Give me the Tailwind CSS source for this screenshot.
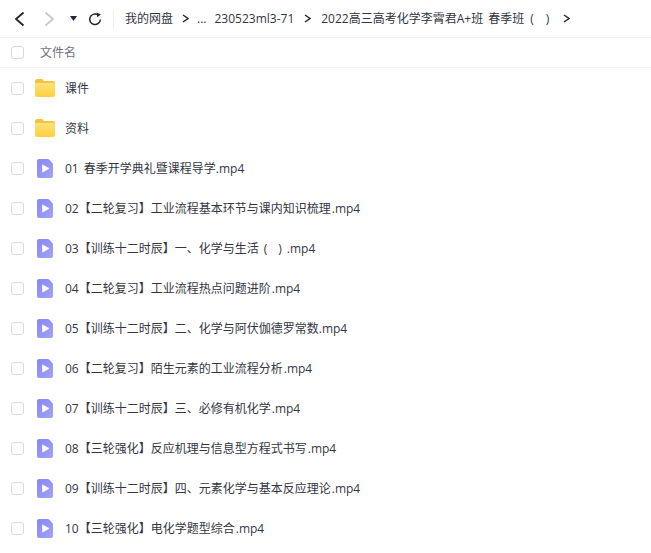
<!DOCTYPE html>
<html lang="zh-CN">
<head>
  <meta charset="UTF-8" />
  <title>我的网盘</title>
  <script src="https://cdn.jsdelivr.net/npm/@tailwindcss/browser@4"></script>
</head>
<body class="bg-white text-[#33363f] h-[553px] overflow-hidden font-['Open_Sans','Noto_Sans_CJK_SC',sans-serif] text-[12px]">

  <!-- shared gradients -->
  <svg class="absolute w-0 h-0">
    <defs>
      <linearGradient id="folderFill" x1="0" y1="0" x2="0" y2="1"><stop offset="0" stop-color="#ffe27a" /><stop offset="1" stop-color="#ffcf3f" /></linearGradient>
      <linearGradient id="videoFill" x1="0" y1="0" x2="1" y2="1"><stop offset="0" stop-color="#8686f8" /><stop offset="1" stop-color="#a5a3f6" /></linearGradient>
    </defs>
  </svg>

  <!-- top bar -->
  <div class="h-[38px] flex items-center border-b border-[#f0f0f2]">
    <svg class="ml-[14px] w-[11px] h-[16px]" viewBox="0 0 11 16" fill="none" stroke="#23262e" stroke-width="1.8"><path d="M9.500 1.500 2 8l7.500 6.500" /></svg>
    <svg class="ml-[19px] w-[11px] h-[16px]" viewBox="0 0 11 16" fill="none" stroke="#c6c8cd" stroke-width="1.8"><path d="M1.500 1.500 9 8l-7.500 6.500" /></svg>
    <svg class="ml-[15px] w-[7px] h-[5px]" viewBox="0 0 7 5" fill="#23262e"><path d="M0 0h7L3.500 5z" /></svg>
    <svg class="ml-[11px] w-[14px] h-[14px]" viewBox="0 0 14 14" fill="none" stroke="#23262e" stroke-width="1.500"><path d="M12.300 7.500A5.300 5.300 0 1 1 9.500 2.600" /><path d="M8.600 0.400 13 2.400 9.200 5.200z" fill="#23262e" stroke="none" /></svg>
    <div class="ml-[11px] w-px h-[18px] bg-[#eeeff1]"></div>
    <div class="ml-[11px] flex items-center whitespace-nowrap">
      <span>我的网盘</span>
      <svg class="ml-[9px] w-[7px] h-[9px]" viewBox="0 0 7 9" fill="none" stroke="#23262e" stroke-width="1.400"><path d="M1 1l5 3.500L1 8" /></svg>
      <span class="ml-[8px]">...</span>
      <span class="ml-[8px]">230523ml3-71</span>
      <svg class="ml-[10px] w-[7px] h-[9px]" viewBox="0 0 7 9" fill="none" stroke="#23262e" stroke-width="1.400"><path d="M1 1l5 3.500L1 8" /></svg>
      <span class="ml-[10px]">2022高三高考化学李霄君A+班 <span class="ml-[2px]">春季班</span><span class="ml-[6px]">(</span><span class="ml-[12px]">)</span></span>
      <svg class="ml-[14px] w-[7px] h-[9px]" viewBox="0 0 7 9" fill="none" stroke="#23262e" stroke-width="1.400"><path d="M1 1l5 3.500L1 8" /></svg>
    </div>
  </div>

  <!-- column header -->
  <div class="h-[30px] flex items-center border-b border-[#f0f0f2] text-[#6f737c]">
    <div class="ml-[11px] w-[13px] h-[13px] rounded-[3px] border border-[#d5d6da]"></div>
    <span class="ml-[16px]">文件名</span>
  </div>

  <!-- rows -->
  <div class="flex flex-col">
    <div class="h-[40px] flex items-center">
      <div class="ml-[11px] w-[13px] h-[13px] rounded-[3px] border border-[#d9dade]"></div>
      <svg class="ml-[11px] w-[20px] h-[18px]" viewBox="0 0 20 18"><path d="M0 2A2 2 0 0 1 2 0h5l2 2h9a2 2 0 0 1 2 2v2H0z" fill="#f7c244" /><path d="M0 4h18a2 2 0 0 1 2 2v10a2 2 0 0 1-2 2H2a2 2 0 0 1-2-2z" fill="url(#folderFill)" /></svg>
      <span class="ml-[10px] pt-[2px]">课件</span>
    </div>
    <div class="h-[40px] flex items-center">
      <div class="ml-[11px] w-[13px] h-[13px] rounded-[3px] border border-[#d9dade]"></div>
      <svg class="ml-[11px] w-[20px] h-[18px]" viewBox="0 0 20 18"><path d="M0 2A2 2 0 0 1 2 0h5l2 2h9a2 2 0 0 1 2 2v2H0z" fill="#f7c244" /><path d="M0 4h18a2 2 0 0 1 2 2v10a2 2 0 0 1-2 2H2a2 2 0 0 1-2-2z" fill="url(#folderFill)" /></svg>
      <span class="ml-[10px] pt-[2px]">资料</span>
    </div>
    <div class="h-[40px] flex items-center">
      <div class="ml-[11px] w-[13px] h-[13px] rounded-[3px] border border-[#d9dade]"></div>
      <svg class="ml-[13px] w-[16px] h-[19px]" viewBox="0 0 16 19"><path d="M2 0h9.500L16 4.500V17a2 2 0 0 1-2 2H2a2 2 0 0 1-2-2V2a2 2 0 0 1 2-2z" fill="url(#videoFill)" /><path d="M5.500 5.800v7.400l6.500-3.700z" fill="#fff" stroke="#fff" stroke-width=".6" stroke-linejoin="round" /></svg>
      <span class="ml-[12px] pt-[2px]">01 <span class="ml-[2px]">春季开学典礼暨课程导学.mp4</span></span>
    </div>
    <div class="h-[40px] flex items-center">
      <div class="ml-[11px] w-[13px] h-[13px] rounded-[3px] border border-[#d9dade]"></div>
      <svg class="ml-[13px] w-[16px] h-[19px]" viewBox="0 0 16 19"><path d="M2 0h9.500L16 4.500V17a2 2 0 0 1-2 2H2a2 2 0 0 1-2-2V2a2 2 0 0 1 2-2z" fill="url(#videoFill)" /><path d="M5.500 5.800v7.400l6.500-3.700z" fill="#fff" stroke="#fff" stroke-width=".6" stroke-linejoin="round" /></svg>
      <span class="ml-[12px] pt-[2px]">02【二轮复习】工业流程基本环节与课内知识梳理<span class="ml-px">.mp4</span></span>
    </div>
    <div class="h-[40px] flex items-center">
      <div class="ml-[11px] w-[13px] h-[13px] rounded-[3px] border border-[#d9dade]"></div>
      <svg class="ml-[13px] w-[16px] h-[19px]" viewBox="0 0 16 19"><path d="M2 0h9.500L16 4.500V17a2 2 0 0 1-2 2H2a2 2 0 0 1-2-2V2a2 2 0 0 1 2-2z" fill="url(#videoFill)" /><path d="M5.500 5.800v7.400l6.500-3.700z" fill="#fff" stroke="#fff" stroke-width=".6" stroke-linejoin="round" /></svg>
      <span class="ml-[12px] pt-[2px]">03【训练十二时辰】一、化学与生活<span class="ml-[5px]">(</span><span class="ml-[11px]">)</span><span class="ml-[5px]">.mp4</span></span>
    </div>
    <div class="h-[40px] flex items-center">
      <div class="ml-[11px] w-[13px] h-[13px] rounded-[3px] border border-[#d9dade]"></div>
      <svg class="ml-[13px] w-[16px] h-[19px]" viewBox="0 0 16 19"><path d="M2 0h9.500L16 4.500V17a2 2 0 0 1-2 2H2a2 2 0 0 1-2-2V2a2 2 0 0 1 2-2z" fill="url(#videoFill)" /><path d="M5.500 5.800v7.400l6.500-3.700z" fill="#fff" stroke="#fff" stroke-width=".6" stroke-linejoin="round" /></svg>
      <span class="ml-[12px] pt-[2px]">04【二轮复习】工业流程热点问题进阶<span class="ml-px">.mp4</span></span>
    </div>
    <div class="h-[40px] flex items-center">
      <div class="ml-[11px] w-[13px] h-[13px] rounded-[3px] border border-[#d9dade]"></div>
      <svg class="ml-[13px] w-[16px] h-[19px]" viewBox="0 0 16 19"><path d="M2 0h9.500L16 4.500V17a2 2 0 0 1-2 2H2a2 2 0 0 1-2-2V2a2 2 0 0 1 2-2z" fill="url(#videoFill)" /><path d="M5.500 5.800v7.400l6.500-3.700z" fill="#fff" stroke="#fff" stroke-width=".6" stroke-linejoin="round" /></svg>
      <span class="ml-[12px] pt-[2px]">05【训练十二时辰】二、化学与阿伏伽德罗常数.mp4</span>
    </div>
    <div class="h-[40px] flex items-center">
      <div class="ml-[11px] w-[13px] h-[13px] rounded-[3px] border border-[#d9dade]"></div>
      <svg class="ml-[13px] w-[16px] h-[19px]" viewBox="0 0 16 19"><path d="M2 0h9.500L16 4.500V17a2 2 0 0 1-2 2H2a2 2 0 0 1-2-2V2a2 2 0 0 1 2-2z" fill="url(#videoFill)" /><path d="M5.500 5.800v7.400l6.500-3.700z" fill="#fff" stroke="#fff" stroke-width=".6" stroke-linejoin="round" /></svg>
      <span class="ml-[12px] pt-[2px]">06【二轮复习】陌生元素的工业流程分析<span class="ml-px">.mp4</span></span>
    </div>
    <div class="h-[40px] flex items-center">
      <div class="ml-[11px] w-[13px] h-[13px] rounded-[3px] border border-[#d9dade]"></div>
      <svg class="ml-[13px] w-[16px] h-[19px]" viewBox="0 0 16 19"><path d="M2 0h9.500L16 4.500V17a2 2 0 0 1-2 2H2a2 2 0 0 1-2-2V2a2 2 0 0 1 2-2z" fill="url(#videoFill)" /><path d="M5.500 5.800v7.400l6.500-3.700z" fill="#fff" stroke="#fff" stroke-width=".6" stroke-linejoin="round" /></svg>
      <span class="ml-[12px] pt-[2px]">07【训练十二时辰】三、必修有机化学<span class="ml-px">.mp4</span></span>
    </div>
    <div class="h-[40px] flex items-center">
      <div class="ml-[11px] w-[13px] h-[13px] rounded-[3px] border border-[#d9dade]"></div>
      <svg class="ml-[13px] w-[16px] h-[19px]" viewBox="0 0 16 19"><path d="M2 0h9.500L16 4.500V17a2 2 0 0 1-2 2H2a2 2 0 0 1-2-2V2a2 2 0 0 1 2-2z" fill="url(#videoFill)" /><path d="M5.500 5.800v7.400l6.500-3.700z" fill="#fff" stroke="#fff" stroke-width=".6" stroke-linejoin="round" /></svg>
      <span class="ml-[12px] pt-[2px]">08【三轮强化】反应机理与信息型方程式书写<span class="ml-px">.mp4</span></span>
    </div>
    <div class="h-[40px] flex items-center">
      <div class="ml-[11px] w-[13px] h-[13px] rounded-[3px] border border-[#d9dade]"></div>
      <svg class="ml-[13px] w-[16px] h-[19px]" viewBox="0 0 16 19"><path d="M2 0h9.500L16 4.500V17a2 2 0 0 1-2 2H2a2 2 0 0 1-2-2V2a2 2 0 0 1 2-2z" fill="url(#videoFill)" /><path d="M5.500 5.800v7.400l6.500-3.700z" fill="#fff" stroke="#fff" stroke-width=".6" stroke-linejoin="round" /></svg>
      <span class="ml-[12px] pt-[2px]">09【训练十二时辰】四、元素化学与基本反应理论<span class="ml-px">.mp4</span></span>
    </div>
    <div class="h-[40px] flex items-center">
      <div class="ml-[11px] w-[13px] h-[13px] rounded-[3px] border border-[#d9dade]"></div>
      <svg class="ml-[13px] w-[16px] h-[19px]" viewBox="0 0 16 19"><path d="M2 0h9.500L16 4.500V17a2 2 0 0 1-2 2H2a2 2 0 0 1-2-2V2a2 2 0 0 1 2-2z" fill="url(#videoFill)" /><path d="M5.500 5.800v7.400l6.500-3.700z" fill="#fff" stroke="#fff" stroke-width=".6" stroke-linejoin="round" /></svg>
      <span class="ml-[12px] pt-[2px]">10【三轮强化】电化学题型综合<span class="ml-px">.mp4</span></span>
    </div>
  </div>

</body>
</html>
